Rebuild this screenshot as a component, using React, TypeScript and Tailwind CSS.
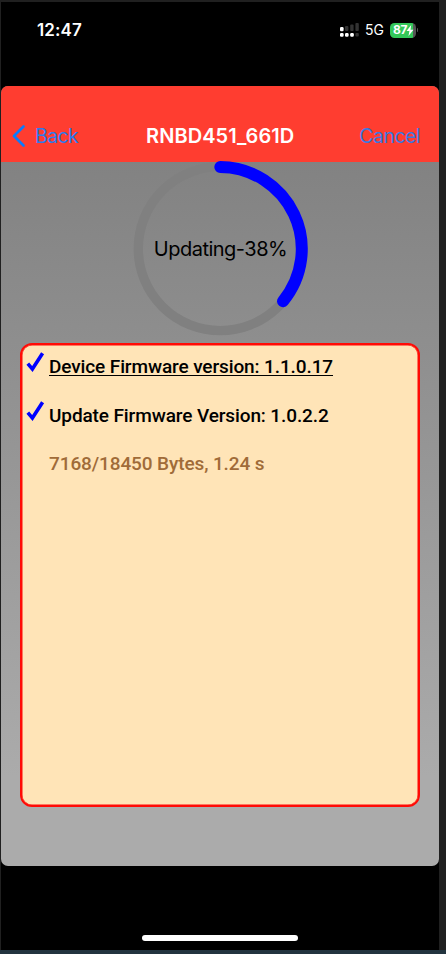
function StatusBar() {
  return (
    <div className="flex h-[84px] items-start pl-9 pr-[21px] pt-[16px] text-white">
      <span className="text-[17px] font-semibold leading-6 tracking-[0.1px]">12:47</span>
      <div className="ml-auto flex h-6 items-center">
        <svg width="20" height="14" viewBox="0 0 20 14" className="mr-[6px]">
          <g fill="#333">
            <rect x="6" y="3" width="3.4" height="5" rx="1" />
            <rect x="11.2" y="1.5" width="3.4" height="6.5" rx="1" />
            <rect x="16.4" y="0" width="3.4" height="8" rx="1" />
            <rect x="16.4" y="10" width="3.4" height="3.6" rx="1" />
          </g>
          <g fill="#fff">
            <rect x="1" y="4" width="3.6" height="4.2" rx="1.2" />
            <rect x="1" y="10" width="3.6" height="3.8" rx="1.2" />
            <rect x="6" y="10" width="3.6" height="3.8" rx="1.2" />
            <rect x="11.2" y="10" width="3.6" height="3.8" rx="1.2" />
          </g>
        </svg>
        <span className="mr-[6px] text-[14px] leading-6">5G</span>
        <div className="flex h-[15px] w-[26px] items-center rounded-[4.5px] bg-[linear-gradient(90deg,#34c759_87%,#555_87%)] pl-[3px]">
          <span className="text-[12px] font-bold leading-none tracking-[-0.4px]">87</span>
          <svg width="8" height="11" viewBox="0 0 8 11" className="-ml-px">
            <path d="M5.2 0 0.5 6.1h2.9L2.5 11 7.5 4.7H4.5z" fill="#fff" />
          </svg>
        </div>
        <span className="ml-px h-1 w-px rounded-r bg-[#555]" />
      </div>
    </div>
  );
}

function Header() {
  return (
    <div className="flex h-[75.5px] shrink-0 items-end bg-[#ff3d30] pb-[14px] text-[20px] leading-6">
      <div className="flex w-[145px] items-center text-[#2d7bee]">
        <svg width="13" height="22" viewBox="0 0 13 22" className="ml-[11px] mr-[10px]">
          <path d="M11.5 1.5 2 11l9.5 9.5" fill="none" stroke="#087cff" strokeWidth="2.6" strokeLinecap="round" strokeLinejoin="round" />
        </svg>
        <span className="text-[19.5px] tracking-[-0.6px]">Back</span>
      </div>
      <span className="whitespace-nowrap font-semibold tracking-[0.08px] text-white">RNBD451_661D</span>
      <span className="ml-auto mr-[19px] text-[19.5px] tracking-[-0.55px] text-[#3b78e0]">Cancel</span>
    </div>
  );
}

function Progress() {
  return (
    <div className="relative -mt-[2px] ml-[131px] grid h-[178px] w-[177px] place-items-center">
      <svg width="178" height="178" viewBox="0 0 178 178" className="absolute left-0 top-0 overflow-visible">
        <circle cx="88.3" cy="88.6" r="82" fill="none" stroke="#808080" strokeWidth="9.4" />
        <path d="M88.3 7A82 82 0 0 1 151 141.2" fill="none" stroke="#00f" strokeWidth="12" strokeLinecap="round" />
      </svg>
      <span className="relative whitespace-nowrap text-[20px] leading-6 tracking-[-0.5px] text-black">Updating-38%</span>
    </div>
  );
}

function Check() {
  return (
    <svg width="19" height="22" viewBox="0 0 19 22" className="shrink-0">
      <path d="M1.8 12.7 6.4 18.1 16.6 2.3" fill="none" stroke="#00f" strokeWidth="3.6" />
    </svg>
  );
}

function LogCard() {
  return (
    <div className="ml-[19px] mt-[5px] h-[464px] w-[400px] rounded-[12px] border-2 border-[#ff0b06] bg-[#ffe4b7] pl-[4px] pt-[6px] font-['Roboto',sans-serif] text-[19px] font-medium leading-6 tracking-[-0.11px] text-black shadow-[inset_0_0_0_0.5px_#ff0b06]">
      <div className="flex h-[49px] items-start">
        <Check />
        <span className="ml-1 mt-[4px] whitespace-nowrap underline decoration-1 underline-offset-[2px]">Device Firmware version: 1.1.0.17</span>
      </div>
      <div className="flex h-[49px] items-start">
        <Check />
        <span className="ml-1 mt-[4px] whitespace-nowrap">Update Firmware Version: 1.0.2.2</span>
      </div>
      <div className="ml-[23px] mt-[3px] whitespace-nowrap text-[#a06b38]">7168/18450 Bytes, 1.24 s</div>
    </div>
  );
}

export default function App() {
  return (
    <div className="h-[954px] w-[446px] overflow-hidden bg-[#202020] pl-px pt-[2px] font-['Inter',sans-serif]">
      <div className="flex h-[948px] w-[438px] flex-col bg-black">
        <StatusBar />
        <div className="flex h-[780px] shrink-0 flex-col overflow-hidden rounded-[7px] bg-[linear-gradient(#828282_75px,#ababab_690px)]">
          <Header />
          <Progress />
          <LogCard />
        </div>
        <div className="ml-[141px] mt-[69px] h-[6px] w-[156px] rounded-full bg-white" />
      </div>
      <div className="-ml-px h-1 w-[446px] bg-[#22343f]" />
    </div>
  );
}
